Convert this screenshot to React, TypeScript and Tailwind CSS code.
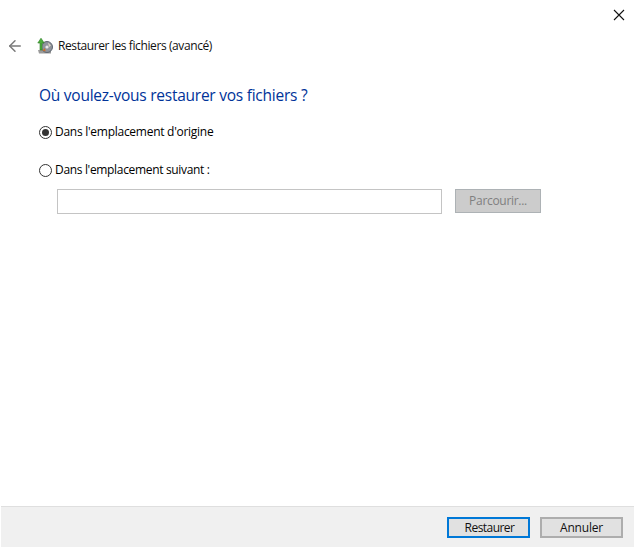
import { ArrowLeft } from 'lucide-react'

const font = { fontFamily: '"Open Sans", "Noto Sans", sans-serif' }

function RestoreIcon() {
  return (
    <svg width="16" height="18" viewBox="0 0 16 18" className="shrink-0">
      <path d="M1 13h13v3.5H2z" fill="#9a9a9a" />
      <circle cx="10" cy="10" r="5.5" fill="#8f949c" stroke="#5f6670" strokeWidth="1" />
      <circle cx="10" cy="10" r="1.6" fill="#e8e8e8" />
      <path d="M11 5.5l3 3-2 1.5z" fill="#d9d2c0" />
      <path d="M8 11l-2.5 2.5 3 1z" fill="#c9702c" />
      <path d="M3 13V6H0.8L4 1.2 7.2 6H5v7z" fill="#4caf3c" stroke="#2c7d24" strokeWidth="0.6" />
    </svg>
  )
}

function Radio({ checked }: { checked?: boolean }) {
  return (
    <span className="w-[13px] h-[13px] rounded-full border border-[#333333] bg-white flex items-center justify-center shrink-0">
      {checked && <span className="w-[7px] h-[7px] rounded-full bg-[#333333]" />}
    </span>
  )
}

export default function App() {
  return (
    <div style={font} className="w-[635px] h-[548px] bg-white flex flex-col text-[12px] text-black overflow-hidden">
      <div className="h-[26px] flex justify-end items-start pt-[9px] pr-[10px]">
        <svg width="12" height="12" viewBox="0 0 12 12">
          <path d="M1 1l10 10M11 1L1 11" stroke="#111111" strokeWidth="1.1" fill="none" />
        </svg>
      </div>

      <div className="h-[24px] mt-[8px] flex items-center pl-[6px]">
        <ArrowLeft size={18} strokeWidth={2} className="text-[#7a7a7a] mr-[13px]" />
        <RestoreIcon />
        <span className="ml-[5px] text-[#111111] tracking-[-0.4px]">Restaurer les fichiers (avancé)</span>
      </div>

      <div className="flex-1 pl-[39px] pt-[25px]">
        <h1 className="text-[15.5px] leading-[24px] font-normal text-[#003399] tracking-[-0.25px]">Où voulez-vous restaurer vos fichiers ?</h1>

        <label className="flex items-center gap-[3px] mt-[16px] h-[18px]">
          <Radio checked />
          <span className="tracking-[-0.27px]">Dans l'emplacement d'origine</span>
        </label>

        <label className="flex items-center gap-[3px] mt-[20px] h-[18px]">
          <Radio />
          <span className="tracking-[-0.33px]">Dans l'emplacement suivant :</span>
        </label>

        <div className="flex items-start mt-[10px] ml-[18px]">
          <div className="w-[385px] h-[25px] border border-[#c4c4c4] bg-white" />
          <button className="w-[86px] h-[24px] ml-[13px] border border-[#adb2b5] bg-[#cccccc] text-[#808080] tracking-[-0.3px]">Parcourir...</button>
        </div>
      </div>

      <div className="h-[41px] mb-[1px] ml-[1px] mr-[1px] bg-[#f0f0f0] border-t border-[#dfdfdf] flex items-center justify-end gap-[10px] pr-[11px]">
        <button className="w-[83px] h-[21px] border-2 border-[#0078d7] bg-[#e1e1e1] text-[#111111] tracking-[-0.55px] pl-[2px]">Restaurer</button>
        <button className="w-[83px] h-[21px] border-2 border-[#adadad] bg-[#e1e1e1] text-[#111111] tracking-[-0.2px]">Annuler</button>
      </div>
    </div>
  )
}
